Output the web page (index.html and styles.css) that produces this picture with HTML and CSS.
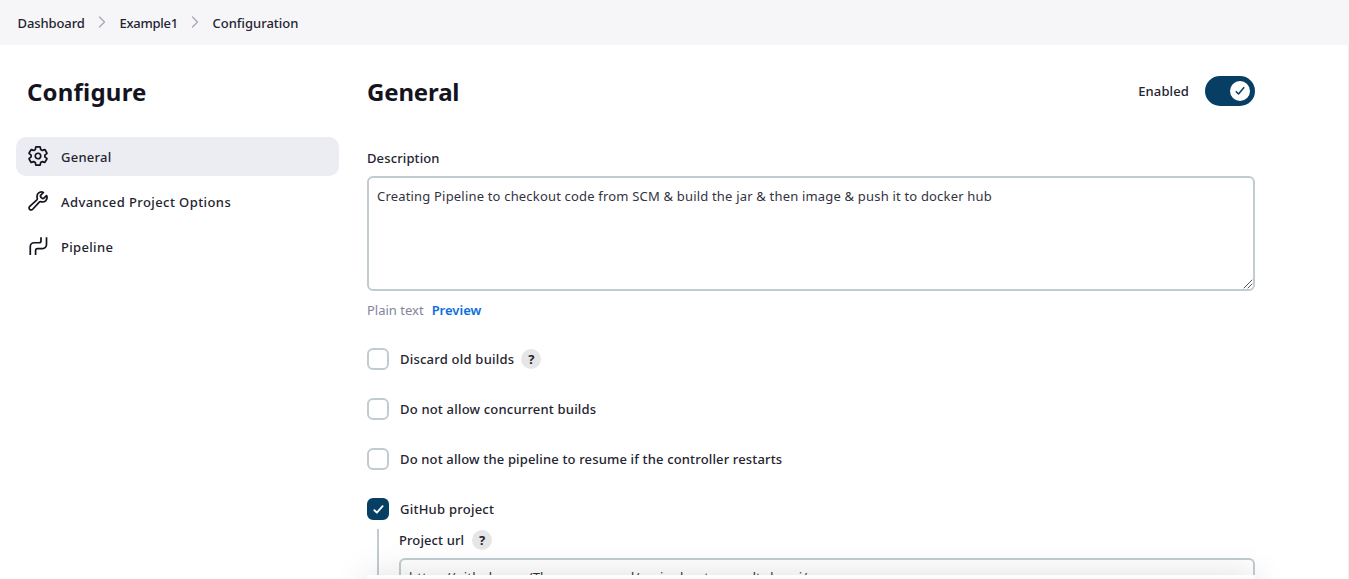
FILE: index.html
```html
<!DOCTYPE html>
<html lang="en">
<head>
<meta charset="utf-8">
<title>Example1 Configuration</title>
<link rel="stylesheet" href="styles.css">
</head>
<body>
<nav class="breadcrumbs">
  <span class="crumb crumb-dashboard">Dashboard</span>
  <svg class="chevron" viewBox="0 0 8 12"><path d="M1.5 1l5 5-5 5"/></svg>
  <span class="crumb crumb-example">Example1</span>
  <svg class="chevron" viewBox="0 0 8 12"><path d="M1.5 1l5 5-5 5"/></svg>
  <span class="crumb crumb-config">Configuration</span>
</nav>
<div class="page">
  <aside class="sidebar">
    <h1 class="title"><span class="t-configure">Configure</span></h1>
    <a class="task task-active">
      <svg class="icon" viewBox="0 0 512 512"><path d="M262.29 192.31a64 64 0 1057.4 57.4 64.13 64.13 0 00-57.4-57.4zM416.39 256a154.34 154.34 0 01-1.53 20.79l45.21 35.46a10.81 10.81 0 012.45 13.75l-42.77 74a10.81 10.81 0 01-13.14 4.59l-44.9-18.08a16.11 16.11 0 00-15.17 1.75A164.48 164.48 0 01325 400.8a15.94 15.94 0 00-8.82 12.14l-6.73 47.89a11.08 11.08 0 01-10.68 9.17h-85.54a11.11 11.11 0 01-10.69-8.87l-6.72-47.82a16.07 16.07 0 00-9-12.22 155.3 155.3 0 01-21.46-12.57 16 16 0 00-15.11-1.71l-44.89 18.07a10.81 10.81 0 01-13.14-4.58l-42.77-74a10.8 10.8 0 012.45-13.75l38.21-30a16.05 16.05 0 006-14.08c-.36-4.17-.58-8.33-.58-12.5s.21-8.27.58-12.35a16 16 0 00-6.07-13.94l-38.19-30A10.81 10.81 0 0149.48 186l42.77-74a10.81 10.81 0 0113.14-4.59l44.9 18.08a16.11 16.11 0 0015.17-1.75A164.48 164.48 0 01187 111.2a15.94 15.94 0 008.82-12.14l6.73-47.89A11.08 11.08 0 01213.23 42h85.54a11.11 11.11 0 0110.69 8.87l6.72 47.82a16.07 16.07 0 009 12.22 155.3 155.3 0 0121.46 12.57 16 16 0 0015.11 1.71l44.89-18.07a10.81 10.81 0 0113.14 4.58l42.77 74a10.8 10.8 0 01-2.45 13.75l-38.21 30a16.05 16.05 0 00-6.05 14.08c.33 4.14.55 8.3.55 12.47z"/></svg>
      <span class="t-nav-general">General</span>
    </a>
    <a class="task">
      <svg class="icon" viewBox="0 0 512 512"><path d="M393.87 190a32.1 32.1 0 01-45.25 0l-26.57-26.57a32.09 32.09 0 010-45.26L382.19 58a1 1 0 00-.3-1.64c-38.82-16.64-89.15-8.16-121.11 23.57-30.58 30.35-32.32 76-21.12 115.84a31.93 31.93 0 01-9.06 32.08L64 380a48.17 48.17 0 1068 68l153.86-167a31.93 31.93 0 0131.6-9.13c39.54 10.59 84.54 8.6 114.72-21.19 32.49-32 39.5-88.56 23.75-120.93a1 1 0 00-1.6-.26z"/></svg>
      <span class="t-advanced">Advanced Project Options</span>
    </a>
    <a class="task">
      <svg class="icon icon-pipe" viewBox="0 0 512 512"><path d="M76 466V270a90 90 0 0 1 90-90h112a48 48 0 0 0 48-48V52M200 466V363a48 48 0 0 1 48-48h114a92 92 0 0 0 92-92V52"/></svg>
      <span class="t-pipeline">Pipeline</span>
    </a>
  </aside>
  <main class="content">
    <header class="heading">
      <h2 class="title"><span class="t-general">General</span></h2>
      <div class="toggle-row">
        <span class="t-enabled">Enabled</span>
        <span class="toggle"><span class="knob"><svg class="tick tick-dark" viewBox="0 0 12 12"><path d="M1.5 6.8l2.7 2.7L10.5 2"/></svg></span></span>
      </div>
    </header>
    <div class="label"><span class="t-description">Description</span></div>
    <div class="textarea">
      <span class="t-text">Creating Pipeline to checkout code from SCM &amp; build the jar &amp; then image &amp; push it to docker hub</span>
      <svg class="grip" viewBox="0 0 10 10"><path d="M1 9l8-8M5 9l4-4"/></svg>
    </div>
    <div class="preview-row"><span class="plain">Plain text</span><a class="preview">Preview</a></div>
    <div class="option"><span class="box"></span><span class="t-discard">Discard old builds</span><span class="help">?</span></div>
    <div class="option"><span class="box"></span><span class="t-concurrent">Do not allow concurrent builds</span></div>
    <div class="option"><span class="box"></span><span class="t-resume">Do not allow the pipeline to resume if the controller restarts</span></div>
    <div class="option"><span class="box box-checked"><svg class="tick" viewBox="0 0 12 12"><path d="M1.5 6.8l2.7 2.7L10.5 2.3"/></svg></span><span class="t-github">GitHub project</span></div>
    <div class="nested">
      <div class="nested-label"><span class="t-url">Project url</span><span class="help">?</span></div>
      <div class="input"><span class="t-link">https://github.com/Thanmayeeread/springboot-mavedt-dev-ci/</span></div>
    </div>
  </main>
</div>
<div class="bottom-clip"><div class="bottom-bar"></div></div>
<div class="edge"></div>
</body>
</html>
```
FILE: styles.css
```css
* { box-sizing: border-box; }
body {
  position: relative;
  margin: 0;
  height: 579px;
  overflow: hidden;
  background: #fff;
  color: #242430;
  font: 500 13px/20px "Noto Sans", "Open Sans", sans-serif;
  white-space: nowrap;
}
svg { display: block; flex: none; fill: none; stroke: currentColor; stroke-linecap: round; stroke-linejoin: round; }
.breadcrumbs { display: flex; align-items: center; height: 45px; padding: 1px 17.5px 0; background: #f6f6f9; }
.chevron { width: 8px; height: 12px; margin: 0 14px 3px 13px; color: #a9a9bd; stroke-width: 1.4; }
.crumb-dashboard { width: 67px; letter-spacing: -.1px; }
.crumb-example { width: 58px; letter-spacing: -.25px; }
.page { display: flex; height: 534px; overflow: hidden; }
.sidebar { width: 339px; padding: 27px 0 0 16px; }
.title { margin: 0; font-size: 24px; line-height: 40px; font-weight: 700; color: #14141f; }
.sidebar .title { padding-left: 11px; margin-bottom: 25px; }
.task { display: flex; align-items: center; gap: 12px; height: 39px; margin-bottom: 6px; padding: 0 11px; border-radius: 10px; }
.task-active { background: #ecedf3; }
.icon { width: 22px; height: 22px; margin-bottom: 2px; stroke-width: 40; color: #14141f; }
.icon-pipe { stroke-linecap: butt; }
.content { width: 888px; margin-left: 28px; padding-top: 27px; }
.heading { display: flex; justify-content: space-between; height: 76px; }
.toggle-row { display: flex; align-items: center; gap: 16px; height: 38px; }
.toggle { display: flex; align-items: center; justify-content: flex-end; width: 50px; height: 30px; padding: 5px; border-radius: 15px; background: #063f63; }
.knob { display: grid; place-items: center; width: 20px; height: 20px; border-radius: 50%; background: #fff; }
.tick { width: 12px; height: 12px; color: #fff; stroke-width: 2; }
.tick-dark { width: 10px; height: 10px; color: #063f63; stroke-width: 1.8; }
.label { height: 28px; }
.textarea { position: relative; height: 115px; padding: 8px; border: 2px solid #c0ccd0; border-radius: 6px; font-weight: 400; color: #33333f; }
.grip { position: absolute; right: 0; bottom: 0; width: 10px; height: 10px; stroke-width: 1; color: #555; }
.preview-row { display: flex; gap: 8px; margin: 9px 0 28px; }
.plain { color: #83839b; font-weight: 400; }
.preview { color: #0b6ede; font-weight: 600; }
.option { display: flex; align-items: center; height: 22px; margin-bottom: 28px; }
.box { display: grid; place-items: center; width: 22px; height: 22px; margin-right: 11px; border: 2px solid #c0ccd0; border-radius: 6px; }
.box-checked { border-color: #063f63; background: #063f63; }
.box-checked .tick { width: 11px; height: 11px; }
.help { display: grid; place-items: center; width: 20px; height: 20px; margin-left: 7px; border-radius: 50%; background: #e6e6e6; font-size: 13px; font-weight: 700; }
.nested { height: 60px; margin: -19px 0 0 10px; padding-left: 20px; border-left: 2px solid #c0ccd0; }
.nested-label { display: flex; align-items: center; height: 20px; padding-top: 1px; margin-bottom: 9px; }
.nested-label .help { margin: 1px 0 0 8px; }
.input { height: 38px; padding: 7px 8px; border: 2px solid #c0ccd0; border-radius: 6px; font-weight: 400; color: #333; }
/* Sticky footer casting a shadow over the form */
.bottom-clip { position: absolute; left: 327px; top: 535px; width: 968px; height: 44px; padding: 40px 40px 0; overflow: hidden; }
.bottom-bar { height: 60px; background: #fdfdfd; box-shadow: 0 0 34px rgba(0,0,0,.13); }
.edge { position: absolute; right: 0; top: 45px; width: 1px; height: 534px; background: #f0f0f2; }

/* Text tracking */
.t-configure { letter-spacing: .2px; }
.t-general { letter-spacing: -.15px; }
.t-nav-general { letter-spacing: .25px; }
.t-advanced { letter-spacing: .41px; }
.t-pipeline { letter-spacing: .33px; }
.t-enabled { letter-spacing: .12px; }
.t-description { letter-spacing: .12px; }
.t-text { letter-spacing: .184px; }
.t-discard { letter-spacing: .22px; }
.t-concurrent { letter-spacing: .19px; }
.t-resume { letter-spacing: .155px; }
.t-github { letter-spacing: .24px; }
.t-url { letter-spacing: .1px; }
.t-link { letter-spacing: .22px; }
```
